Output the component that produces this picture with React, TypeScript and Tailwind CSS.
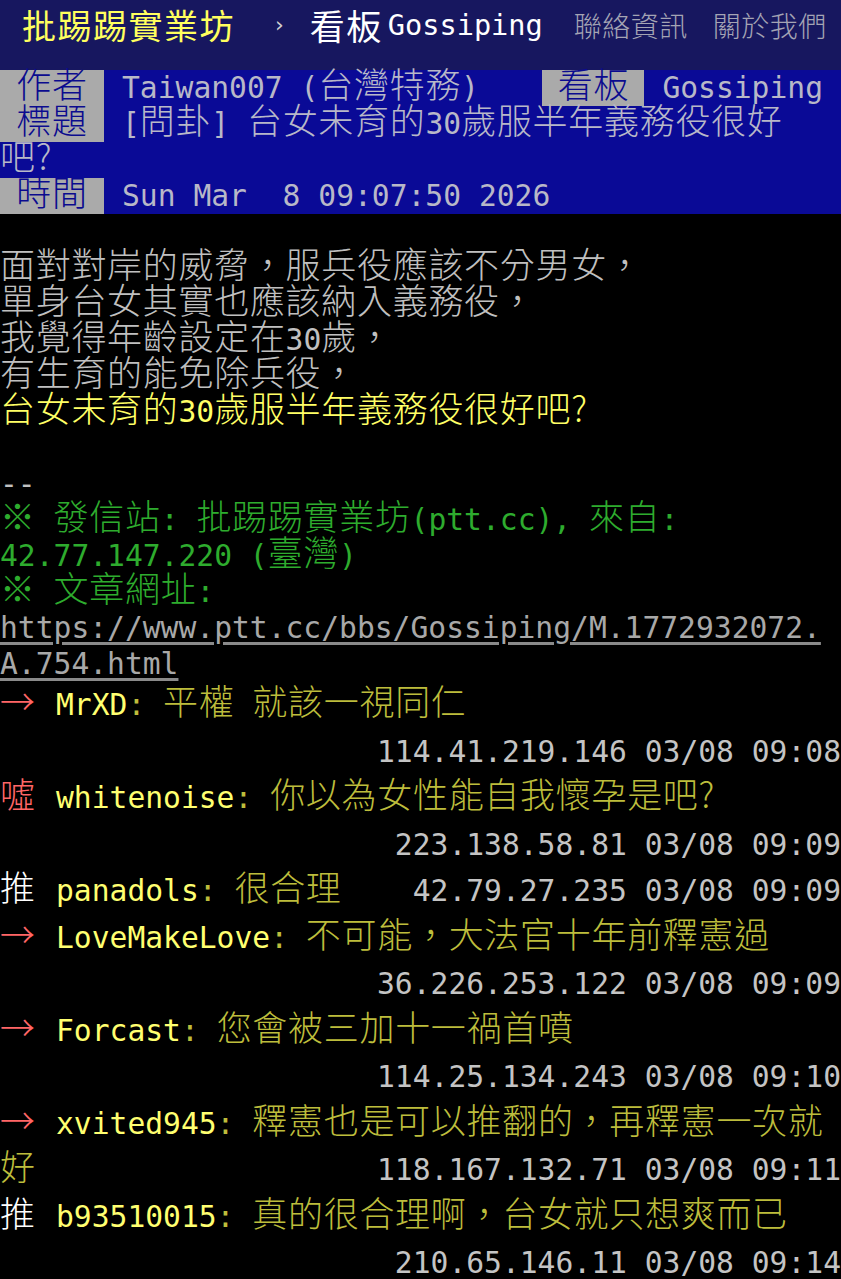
import React from "react";

const CJK =
  "font-['Noto_Sans_CJK_TC','Noto_Sans_CJK_SC',sans-serif] font-light text-[35px] leading-[20px] tracking-[0.7px]";

function T({ s }: { s: string }) {
  const parts = s.match(/[\x00-\x3E\x40-\x7F]+|[^\x00-\x3E\x40-\x7F]+/g) || [];
  return (
    <>
      {parts.map((p, i) =>
        /^[\x00-\x3E\x40-\x7F]/.test(p) ? (
          <span key={i}>{p}</span>
        ) : (
          <span key={i} className={CJK}>
            {p}
          </span>
        )
      )}
    </>
  );
}

function Label({ s, w = "w-[104px]" }: { s: string; w?: string }) {
  return (
    <div className={`${w} h-[36px] shrink-0 bg-[#aaaaaa] text-[#0b0b8f] text-center`}>
      <T s={s} />
    </div>
  );
}

type Push = {
  tag: string;
  tagColor: string;
  user: string;
  content: string;
  ip: string;
  inline?: boolean;
  rest?: string;
};

const pushes: Push[] = [
  { tag: "→", tagColor: "text-[#ff6666]", user: "MrXD", content: ": 平權 就該一視同仁", ip: "114.41.219.146 03/08 09:08" },
  { tag: "噓", tagColor: "text-[#ff6666]", user: "whitenoise", content: ": 你以為女性能自我懷孕是吧?", ip: "223.138.58.81 03/08 09:09" },
  { tag: "推", tagColor: "text-white", user: "panadols", content: ": 很合理", ip: "42.79.27.235 03/08 09:09", inline: true },
  { tag: "→", tagColor: "text-[#ff6666]", user: "LoveMakeLove", content: ": 不可能，大法官十年前釋憲過", ip: "36.226.253.122 03/08 09:09" },
  { tag: "→", tagColor: "text-[#ff6666]", user: "Forcast", content: ": 您會被三加十一禍首噴", ip: "114.25.134.243 03/08 09:10" },
  { tag: "→", tagColor: "text-[#ff6666]", user: "xvited945", content: ": 釋憲也是可以推翻的，再釋憲一次就", ip: "118.167.132.71 03/08 09:11", rest: "好" },
  { tag: "推", tagColor: "text-white", user: "b93510015", content: ": 真的很合理啊，台女就只想爽而已", ip: "210.65.146.11 03/08 09:14" },
];

function PushBlock({ p }: { p: Push }) {
  const head = (
    <div className="flex-1 min-w-0">
      <span className={`inline-block w-[56px] ${p.tagColor}`}>
        <T s={p.tag} />
      </span>
      <span className="text-[#ffff70]">{p.user}</span>
      <span className="text-[#bdbd3c]">
        <T s={p.content} />
      </span>
    </div>
  );
  const ip = <div className="text-[#c4c4c4]">{p.ip}</div>;
  if (p.inline) {
    return (
      <div className="flex h-[46.5px] leading-[46.5px]">
        {head}
        {ip}
      </div>
    );
  }
  return (
    <>
      <div className="flex h-[46.5px] leading-[46.5px]">{head}</div>
      <div className="flex h-[46.5px] leading-[46.5px]">
        <div className="flex-1 text-[#bdbd3c]">{p.rest ? <T s={p.rest} /> : null}</div>
        {ip}
      </div>
    </>
  );
}

const bodyLines = [
  "面對對岸的威脅，服兵役應該不分男女，",
  "單身台女其實也應該納入義務役，",
  "我覺得年齡設定在30歲，",
  "有生育的能免除兵役，",
];

export default function App() {
  return (
    <div className="w-[841px] min-h-[1279px] bg-black overflow-hidden font-['DejaVu_Sans_Mono',monospace] text-[29.65px] leading-[36px] whitespace-pre text-[#c0c0c0]">
      {/* top bar */}
      <div className="h-[70px] bg-[#17175f]">
        <div className="flex items-center h-[50px] pl-[22px]">
          <span className="font-['Noto_Sans_CJK_TC',sans-serif] text-[34px] tracking-[1.5px] text-[#ffff5e] leading-[40px]">
            批踢踢實業坊
          </span>
          <span className="ml-[40px] font-['DejaVu_Sans',sans-serif] text-[22px] text-[#d0d0d0] leading-[40px]">›</span>
          <span className="ml-[26px] font-['Noto_Sans_CJK_TC',sans-serif] text-[35px] tracking-[1.5px] text-white leading-[40px]">
            看板
          </span>
          <span className="ml-[5px] text-[28.6px] text-white leading-[40px]">Gossiping</span>
          <span className="ml-[31px] font-['Noto_Sans_CJK_TC',sans-serif] font-light text-[28px] tracking-[0.5px] text-[#a4a4b4] leading-[40px]">
            聯絡資訊
          </span>
          <span className="ml-[25px] font-['Noto_Sans_CJK_TC',sans-serif] font-light text-[28px] tracking-[0.5px] text-[#a4a4b4] leading-[40px]">
            關於我們
          </span>
        </div>
      </div>

      {/* meta */}
      <div className="bg-[#0a0a96] text-[#b8b8c8]">
        <div className="flex h-[36px]">
          <Label s="作者" />
          <div className="pl-[18px]">
            <T s="Taiwan007 (台灣特務)" />
          </div>
          <div className="ml-auto flex">
            <Label s="看板" w="w-[102px]" />
            <div className="pl-[18px] pr-[18px]">Gossiping</div>
          </div>
        </div>
        <div className="flex h-[36px]">
          <Label s="標題" />
          <div className="pl-[18px]">
            <T s="[問卦] 台女未育的30歲服半年義務役很好" />
          </div>
        </div>
        <div className="h-[36px]">
          <T s="吧?" />
        </div>
        <div className="flex h-[36px]">
          <Label s="時間" />
          <div className="pl-[18px]">Sun Mar  8 09:07:50 2026</div>
        </div>
      </div>

      {/* body */}
      <div className="h-[36px]" />
      {bodyLines.map((l, i) => (
        <div key={i} className="h-[36px]">
          <T s={l} />
        </div>
      ))}
      <div className="h-[36px] text-[#ffff66]">
        <T s="台女未育的30歲服半年義務役很好吧?" />
      </div>
      <div className="h-[36px]" />
      <div className="h-[36px]">--</div>
      <div className="h-[36px] text-[#2eac2e]">
        <T s="※ 發信站: 批踢踢實業坊(ptt.cc), 來自:" />
      </div>
      <div className="h-[36px] text-[#2eac2e]">
        <T s="42.77.147.220 (臺灣)" />
      </div>
      <div className="h-[36px] text-[#2eac2e]">
        <T s="※ 文章網址:" />
      </div>
      <div className="h-[36px] text-[#a8a8a8]">
        <span className="underline decoration-[#8a8a8a] decoration-[3px] underline-offset-[4px]">
          https://www.ptt.cc/bbs/Gossiping/M.1772932072.
        </span>
      </div>
      <div className="h-[36px] text-[#a8a8a8]">
        <span className="underline decoration-[#8a8a8a] decoration-[3px] underline-offset-[4px]">A.754.html</span>
      </div>

      {/* pushes */}
      {pushes.map((p, i) => (
        <PushBlock key={i} p={p} />
      ))}
    </div>
  );
}
